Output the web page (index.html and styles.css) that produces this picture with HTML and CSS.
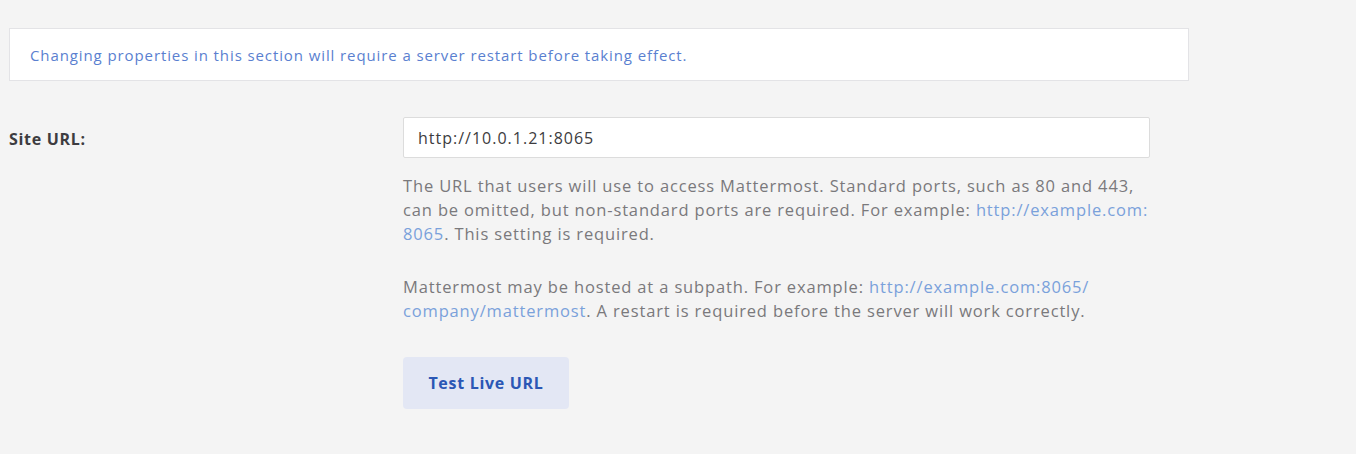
FILE: index.html
```html
<!DOCTYPE html>
<html>
<head>
<meta charset="utf-8">
<link rel="stylesheet" href="styles.css">
</head>
<body>
<div class="page">
  <div class="banner">Changing properties in this section will require a server restart before taking effect.</div>
  <div class="row">
    <label class="label">Site URL:</label>
    <div class="field">
      <div class="input">http://10.0.1.21:8065</div>
      <div class="help">
        <p>The URL that users will use to access Mattermost. Standard ports, such as 80 and 443,<br>can be omitted, but non-standard ports are required. For example: <a>http://example.com:<br>8065</a>. This setting is required.</p>
        <p>Mattermost may be hosted at a subpath. For example: <a>http://example.com:8065/<br>company/mattermost</a>. A restart is required before the server will work correctly.</p>
      </div>
      <button class="btn">Test Live URL</button>
    </div>
  </div>
</div>
</body>
</html>
```
FILE: styles.css
```css
html, body {
  margin: 0;
  padding: 0;
  background: #f4f4f4;
  font-family: "Open Sans", sans-serif;
  color: #3d3c40;
}
.page {
  padding: 28px 0 0 9px;
  width: 1180px;
}
.banner {
  background: #fff;
  border: 1px solid #e3e3e6;
  height: 53px;
  box-sizing: border-box;
  padding: 0 20px;
  display: flex;
  align-items: center;
  font-size: 15px;
  letter-spacing: 0.9px;
  color: #5a7fd0;
}
.row {
  display: flex;
  margin-top: 36px;
}
.label {
  width: 394px;
  font-weight: 700;
  font-size: 16px;
  letter-spacing: 0.7px;
  padding-top: 11px;
  color: #3d3c40;
}
.field {
  width: 747px;
  display: flex;
  flex-direction: column;
  align-items: flex-start;
}
.input {
  box-sizing: border-box;
  width: 747px;
  height: 41px;
  background: #fff;
  border: 1px solid #dcdcdc;
  border-radius: 2px;
  padding: 0 14px;
  display: flex;
  align-items: center;
  font-size: 16px;
  letter-spacing: 1px;
  color: #3d3c40;
}
.help {
  width: 760px;
  font-size: 16.5px;
  letter-spacing: 0.85px;
  line-height: 24px;
  color: #7a797c;
  margin-top: 16px;
  white-space: nowrap;
}
.help p {
  margin: 0 0 29px 0;
}
.help p:last-child {
  margin-bottom: 34px;
}
.help a {
  color: #7aa1db;
}
.btn {
  width: 166px;
  height: 52px;
  border: none;
  border-radius: 4px;
  background: #e3e7f4;
  color: #2b57b5;
  font-family: "Open Sans", sans-serif;
  font-weight: 700;
  font-size: 16px;
  letter-spacing: 0.7px;
  padding: 0;
}
```
